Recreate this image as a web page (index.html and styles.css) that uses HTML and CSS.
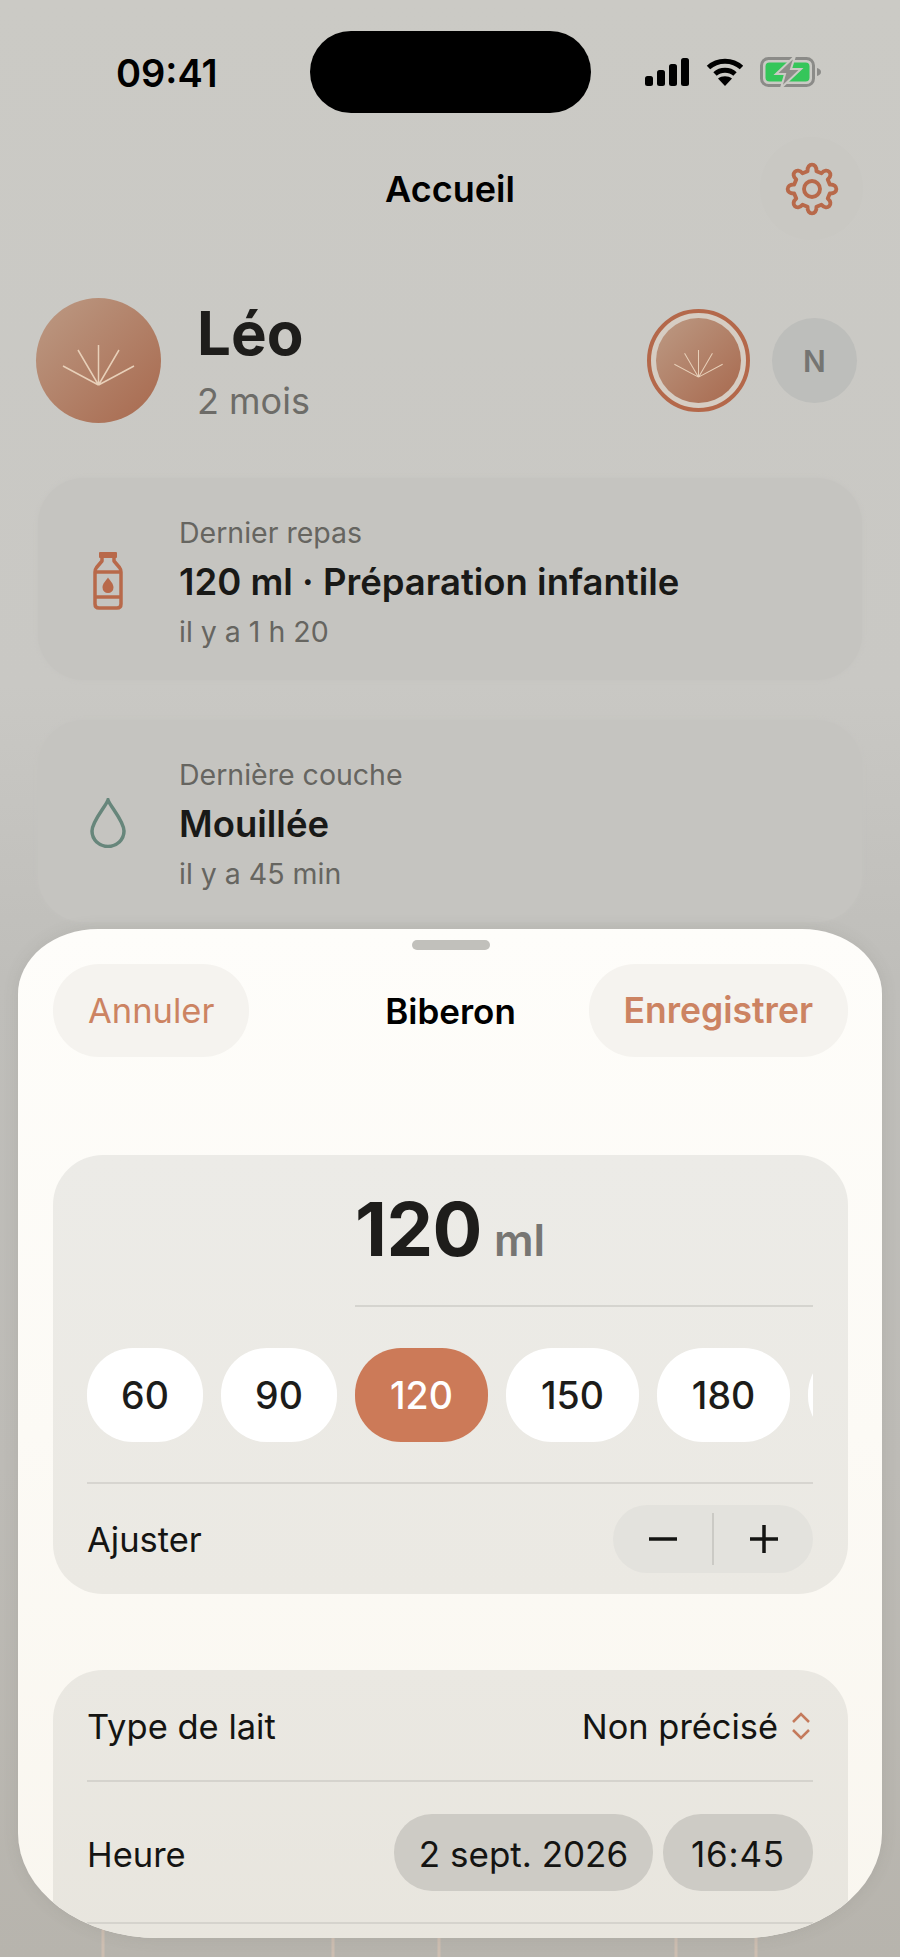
FILE: index.html
```html
<!DOCTYPE html>
<html lang="fr">
<head>
<meta charset="utf-8">
<title>Accueil</title>
<link rel="stylesheet" href="styles.css">
</head>
<body>
<div class="phone">
  <header class="status">
    <span class="time">09:41</span>
    <span class="island"></span>
    <div class="status-icons">
      <svg class="signal" viewBox="0 0 44 28"><rect x="0" y="18" width="8" height="10" rx="2.5"/><rect x="12" y="12" width="8" height="16" rx="2.5"/><rect x="24" y="6" width="8" height="22" rx="2.5"/><rect x="36" y="0" width="8" height="28" rx="2.5"/></svg>
      <svg class="wifi" viewBox="0 0 38 28"><path class="wifi-arc" d="M2.5 9.5C11.5 1 26.500 1 35.500 9.500"/><path class="wifi-arc" d="M9 16C14.500 11 23.500 11 29 16"/><path class="wifi-dot" d="M19 28L12 20.500C16 17.500 22 17.500 26 20.500Z"/></svg>
      <svg class="battery" viewBox="0 0 62 30"><rect class="bat-shell" x="1.500" y="1.500" width="52" height="27" rx="7"/><rect class="bat-fill" x="5.500" y="5.500" width="44" height="19" rx="4"/><path class="bat-nub" d="M57 11c3 .8 4 2.300 4 4s-1 3.200-4 4z"/><path class="bat-bolt" d="M35 -1L16 17H25L21 31L41 12H31Z"/></svg>
    </div>
  </header>

  <nav class="topnav">
    <h1 class="topnav-title">Accueil</h1>
    <button class="gear-btn" aria-label="Réglages">
      <svg class="gear" viewBox="-12.500 -12.500 25 25"><path d="M-2.06-8.25C-2.39-12.27 2.39-12.27 2.06-8.25L4.38-7.29C6.99-10.36 10.36-6.99 7.29-4.38L8.25-2.06C12.27-2.39 12.27 2.39 8.25 2.06L7.29 4.38C10.36 6.99 6.99 10.36 4.38 7.29L2.06 8.25C2.39 12.27-2.39 12.27-2.06 8.25L-4.38 7.29C-6.99 10.36-10.36 6.99-7.29 4.38L-8.25 2.06C-12.27 2.39-12.27-2.39-8.25-2.06L-7.29-4.38C-10.36-6.99-6.99-10.36-4.38-7.29Z"/><circle r="3.700"/></svg>
    </button>
  </nav>

  <section class="profile">
    <div class="avatar avatar-lg">
      <svg class="rays" viewBox="0 0 125 125"><path d="M62.500 87L27 68M62.500 87L42 52M62.500 87V47M62.500 87L83 52M62.500 87L98 68"/></svg>
    </div>
    <div class="profile-text">
      <div class="profile-name">Léo</div>
      <div class="profile-age">2 mois</div>
    </div>
    <div class="switcher">
      <div class="ring">
        <div class="avatar avatar-sm">
          <svg class="rays" viewBox="0 0 125 125"><path d="M62.500 87L27 68M62.500 87L42 52M62.500 87V47M62.500 87L83 52M62.500 87L98 68"/></svg>
        </div>
      </div>
      <div class="avatar-n">N</div>
    </div>
  </section>

  <section class="summary">
    <article class="summary-card">
      <div class="summary-icon">
        <svg class="bottle" viewBox="0 0 30 58"><rect class="bottle-solid" x="6" y="0" width="18" height="6" rx="1"/><path class="bottle-line" d="M9 6V9L3.500 15.500C2.300 17 2 18 2 20V52C2 54.500 3.500 56 6 56H24C26.500 56 28 54.500 28 52V20C28 18 27.700 17 26.500 15.500L21 9V6M2 20H28M2 45H28"/><path class="bottle-solid" d="M15 25.500C17 28.500 20.500 31.500 20.500 35.500A5.500 5.500 0 0 1 9.500 35.500C9.500 31.500 13 28.500 15 25.500Z"/></svg>
      </div>
      <div class="summary-text">
        <div class="summary-label">Dernier repas</div>
        <div class="summary-value">120 ml · Préparation infantile</div>
        <div class="summary-label">il y a 1 h 20</div>
      </div>
    </article>
    <article class="summary-card">
      <div class="summary-icon">
        <svg class="drop" viewBox="0 0 36 50"><path d="M18 2C20 8 34 23 34 33A16 15.500 0 0 1 2 33C2 23 16 8 18 2Z"/></svg>
      </div>
      <div class="summary-text">
        <div class="summary-label">Dernière couche</div>
        <div class="summary-value">Mouillée</div>
        <div class="summary-label">il y a 45 min</div>
      </div>
    </article>
  </section>

  <svg class="peek" viewBox="0 0 900 30"><path d="M103 0V30M333 0V30M439 0V30M676 0V30M756 0V30"/></svg>

  <section class="sheet">
    <div class="handle"></div>
    <header class="sheet-head">
      <button class="pill-btn pill-cancel">Annuler</button>
      <h2 class="sheet-title">Biberon</h2>
      <button class="pill-btn pill-save">Enregistrer</button>
    </header>

    <div class="panel panel-amount">
      <div class="amount-row">
        <span class="amount-num">120</span>
        <span class="amount-unit">ml</span>
      </div>
      <div class="chips">
        <span class="chip">60</span>
        <span class="chip">90</span>
        <span class="chip chip-on">120</span>
        <span class="chip chip-w">150</span>
        <span class="chip chip-w">180</span>
        <span class="chip chip-w"></span>
      </div>
      <div class="row row-adjust">
        <span class="row-label">Ajuster</span>
        <div class="stepper">
          <span class="step"><svg class="step-icon" viewBox="0 0 30 30"><path d="M1 15H29"/></svg></span>
          <span class="step-sep"></span>
          <span class="step"><svg class="step-icon" viewBox="0 0 30 30"><path d="M1 15H29M15 1V29"/></svg></span>
        </div>
      </div>
    </div>

    <div class="panel panel-details">
      <div class="row row-type">
        <span class="row-label">Type de lait</span>
        <span class="picker">Non précisé
          <svg class="chevrons" viewBox="0 0 20 28"><path d="M2 10L10 2L18 10M2 18L10 26L18 18"/></svg>
        </span>
      </div>
      <div class="row row-time">
        <span class="row-label">Heure</span>
        <div class="time-pills">
          <span class="time-pill time-date">2 sept. 2026</span>
          <span class="time-pill time-hour">16:45</span>
        </div>
      </div>
    </div>
  </section>
</div>
</body>
</html>
```
FILE: styles.css
```css
* { box-sizing: border-box; }
html, body { margin: 0; padding: 0; }
body { font-family: Inter, "Noto Sans", sans-serif; color: #141412; }
h1, h2 { margin: 0; font: inherit; }
button { font: inherit; border: 0; background: none; padding: 0; color: inherit; }

.phone {
  position: relative;
  width: 900px;
  height: 1957px;
  overflow: hidden;
  background: linear-gradient(180deg, #cbcac5 0%, #c9c8c4 35%, #bfbeba 50%, #bdbbb6 75%, #b7b4ad 100%);
}

/* status bar */
.status { display: flex; align-items: center; padding-top: 31px; height: 113px; padding-left: 116px; }
.time { width: 194px; padding-top: 2px; font-size: 38px; font-weight: 600; color: #000; }
.island { width: 281px; height: 82px; border-radius: 41px; background: #000; }
.status-icons { display: flex; align-items: center; margin-left: 54px; }
.signal { width: 44px; height: 28px; fill: #000; }
.wifi { width: 38px; height: 28px; margin-left: 17px; }
.wifi-arc { fill: none; stroke: #000; stroke-width: 5; }
.wifi-dot { fill: #000; }
.battery { width: 62px; height: 30px; margin-left: 16px; overflow: visible; }
.bat-shell { fill: none; stroke: #8b8b88; stroke-width: 3; }
.bat-fill { fill: #35c65a; }
.bat-nub { fill: #8b8b88; }
.bat-bolt { fill: #8e8e8a; stroke: #cbcac5; stroke-width: 2; }

/* nav */
.topnav { display: grid; grid-template-columns: 1fr auto 1fr; align-items: center; margin-top: 24px; padding-right: 37px; padding-left: 37px; }
.topnav-title { grid-column: 2; font-size: 36px; font-weight: 600; color: #000; }
.gear-btn { grid-column: 3; justify-self: end; display: flex; align-items: center; justify-content: center; width: 103px; height: 103px; border-radius: 50%; background: #c9c8c3; }
.gear { width: 54px; height: 54px; fill: none; stroke: #b8694a; stroke-width: 1.800; stroke-linejoin: round; }

/* profile */
.profile { display: flex; align-items: center; height: 125px; margin-top: 58px; padding: 0 43px 0 36px; }
.avatar { border-radius: 50%; background: linear-gradient(135deg, #bc9a84 0%, #a8694e 100%); }
.avatar-lg { width: 125px; height: 125px; flex: none; }
.avatar-sm { width: 85px; height: 85px; }
.rays { display: block; width: 100%; height: 100%; fill: none; stroke: #e8d0b9; stroke-width: 1.500; }
.profile-text { margin-left: 36px; }
.profile-name { font-size: 60px; line-height: 70px; font-weight: 700; color: #1e1d1b; }
.profile-age { margin-top: 11px; font-size: 36px; line-height: 44px; color: #6d6c68; }
.switcher { display: flex; align-items: center; gap: 22px; margin-left: auto; }
.ring { display: flex; align-items: center; justify-content: center; width: 103px; height: 103px; border-radius: 50%; border: 4px solid #b4684a; background: #d6cdc3; }
.avatar-n { display: flex; align-items: center; justify-content: center; width: 85px; height: 85px; border-radius: 50%; background: #bdbebb; color: #757572; font-size: 30px; font-weight: 600; }

/* summary cards */
.summary { display: flex; flex-direction: column; gap: 40px; margin: 55px 38px 0; }
.summary-card { display: flex; align-items: center; gap: 41px; height: 202px; padding: 5px 0 0 40px; border-radius: 46px; background: #c5c4c0; box-shadow: 0 0 5px #c5c4c0; }
.summary-icon { display: flex; justify-content: center; width: 60px; margin-top: -2px; }
.bottle { width: 30px; height: 58px; }
.bottle-solid { fill: #b8694a; }
.bottle-line { fill: none; stroke: #b8694a; stroke-width: 3.500; stroke-linejoin: round; }
.drop { width: 36px; height: 50px; fill: none; stroke: #67867b; stroke-width: 3.500; }
.summary-label { font-size: 28.500px; line-height: 49px; color: #666560; }
.summary-value { font-size: 36.500px; line-height: 50px; font-weight: 600; color: #191917; }

/* bottom tab remnant */
.peek { position: absolute; left: 0; bottom: 0; width: 900px; height: 30px; fill: none; stroke: #cdbeb1; stroke-width: 3; }

/* sheet */
.sheet {
  position: absolute;
  left: 18px;
  top: 929px;
  width: 864px;
  height: 1009px;
  padding: 11px 34px 0 35px;
  overflow: hidden;
  border-radius: 80px 80px 140px 140px / 65px 65px 105px 105px;
  background: linear-gradient(180deg, #fefdfa 0%, #fcfaf5 50%, #f9f6ef 100%);
  box-shadow: 0 0 16px rgba(90, 88, 80, 0.12);
}
.handle { width: 78px; height: 10px; margin: 0 auto; border-radius: 5px; background: #c1c0bb; }
.sheet-head { display: grid; grid-template-columns: 1fr auto 1fr; align-items: center; margin-top: 14px; }
.sheet-title { font-size: 35px; font-weight: 600; color: #000; }
.pill-btn { display: flex; align-items: center; height: 93px; padding: 0 35px; border-radius: 46px; background: #f5f3ef; font-size: 34.500px; color: #cc8362; white-space: nowrap; }
.pill-cancel { justify-self: start; }
.pill-save { justify-self: end; font-size: 35.500px; font-weight: 600; }

.panel { border-radius: 50px; padding: 0 35px 0 34px; }
.panel-amount { margin-top: 98px; height: 439px; background: linear-gradient(180deg, #ecebe7, #ebe9e3); }
.panel-details { margin-top: 76px; height: 400px; background: linear-gradient(180deg, #eae8e2, #e7e4dc); }

.amount-row { display: flex; align-items: baseline; gap: 12px; height: 152px; margin-left: 268px; padding-top: 29px; border-bottom: 2px solid #d5d4cf; }
.amount-num { font-size: 74px; font-weight: 700; color: #1e1d1b; letter-spacing: -0.5px; }
.amount-unit { font-size: 44px; font-weight: 600; color: #777673; }

.chips { display: flex; gap: 18px; margin-top: 41px; overflow: hidden; }
.chip { display: flex; align-items: center; justify-content: center; flex: none; width: 116px; height: 94px; border-radius: 46px; background: #fff; font-size: 37.500px; font-weight: 500; color: #1c1c1a; }
.chip-w { width: 133px; }
.chip-on { width: 133px; background: #cc7a58; color: #fff; }

.row { display: flex; align-items: center; justify-content: space-between; }
.row-label { font-size: 34.500px; color: #141412; }
.row-adjust { height: 112px; margin-top: 40px; border-top: 2px solid #d7d5d0; }
.stepper { display: flex; align-items: center; width: 200px; height: 68px; border-radius: 34px; background: #e3e2dd; }
.step { display: flex; flex: 1; align-items: center; justify-content: center; }
.step-sep { width: 2px; height: 52px; background: #cbcac5; }
.step-icon { display: block; width: 30px; height: 30px; fill: none; stroke: #141412; stroke-width: 3.500; }

.row-type { height: 112px; padding-top: 2px; border-bottom: 2px solid #d5d3cd; }
.picker { display: flex; align-items: center; gap: 13px; font-size: 34.400px; color: #141412; }
.chevrons { width: 20px; height: 28px; margin-right: 2px; fill: none; stroke: #c47a5c; stroke-width: 2.500; }
.row-time { height: 142px; border-bottom: 2px solid #d5d3cd; }
.row-time .row-label { padding-top: 4px; }
.time-pills { display: flex; gap: 10px; }
.time-pill { display: flex; align-items: center; justify-content: center; height: 77px; padding-top: 3px; border-radius: 38px; background: #cdcbc5; font-size: 35px; color: #141412; }
.time-date { width: 259px; }
.time-hour { width: 150px; letter-spacing: 0.8px; }
```
